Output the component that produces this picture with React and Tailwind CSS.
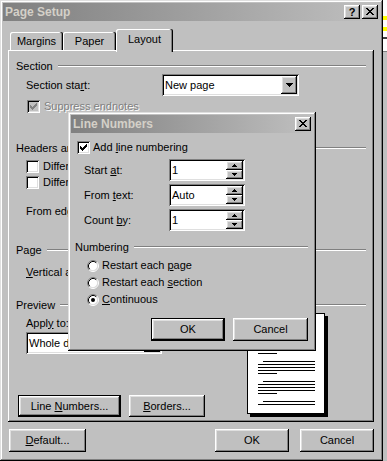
import React from "react";

const raised =
  "shadow-[inset_-1px_-1px_0_#000,inset_1px_1px_0_#fff,inset_-2px_-2px_0_#808080,inset_2px_2px_0_#dfdfdf]";
const sunken =
  "shadow-[inset_1px_1px_0_#808080,inset_-1px_-1px_0_#fff,inset_2px_2px_0_#000,inset_-2px_-2px_0_#dfdfdf]";
const frame =
  "shadow-[inset_-1px_-1px_0_#000,inset_1px_1px_0_#dfdfdf,inset_-2px_-2px_0_#808080,inset_2px_2px_0_#fff]";

function Pix({ rows, color = "#000", className = "" }) {
  const rects = [];
  rows.forEach((r, y) => {
    for (let x = 0; x < r.length; x++)
      if (r[x] === "X") rects.push(<rect key={x + "-" + y} x={x} y={y} width="1" height="1" />);
  });
  return (
    <svg width={rows[0].length} height={rows.length} fill={color} shapeRendering="crispEdges" className={className}>
      {rects}
    </svg>
  );
}

const CHECK = ["......X", ".....XX", "X...XXX", "XX.XXX.", "XXXXX..", ".XXX...", "..X...."];
const CLOSE = ["XX....XX", ".XX..XX.", "..XXXX..", "...XX...", "..XXXX..", ".XX..XX.", "XX....XX"];
const DOWN = ["XXXXXXX", ".XXXXX.", "..XXX..", "...X..."];
const SUP = ["..X..", ".XXX.", "XXXXX"];
const SDOWN = ["XXXXX", ".XXX.", "..X.."];

function Btn({ children, className = "", def = false }) {
  if (def)
    return (
      <div className={`border border-black bg-[#c0c0c0] ${className}`}>
        <div className={`w-full h-full flex items-center justify-center ${raised}`}>{children}</div>
      </div>
    );
  return <div className={`bg-[#c0c0c0] flex items-center justify-center ${raised} ${className}`}>{children}</div>;
}

function TitleBar({ title, help }) {
  return (
    <div className="h-[18px] flex items-center bg-linear-to-r from-[#808080] to-[#c0c0c0]">
      <span className="pl-[2px] font-bold text-[12px] text-[#d4d0c8] flex-1">{title}</span>
      {help && (
        <div className={`w-[16px] h-[14px] bg-[#c0c0c0] ${raised} flex items-center justify-center font-bold text-[11px] mr-[2px]`}>
          ?
        </div>
      )}
      <div className={`w-[16px] h-[14px] bg-[#c0c0c0] ${raised} flex items-center justify-center mr-[2px]`}>
        <Pix rows={CLOSE} className="-mt-[1px] -ml-[1px]" />
      </div>
    </div>
  );
}

function Check({ checked, disabled }) {
  return (
    <div className={`w-[13px] h-[13px] shrink-0 ${disabled ? "bg-[#c0c0c0]" : "bg-white"} ${sunken} flex items-center justify-center`}>
      {checked && <Pix rows={CHECK} color={disabled ? "#808080" : "#000"} />}
    </div>
  );
}

function Radio({ checked }) {
  return (
    <svg width="12" height="12" viewBox="0 0 12 12" className="shrink-0">
      <circle cx="6" cy="6" r="4.5" fill="#fff" />
      <path d="M2.11 9.89 A5.5 5.5 0 0 1 9.89 2.11" stroke="#808080" fill="none" />
      <path d="M9.89 2.11 A5.5 5.5 0 0 1 2.11 9.89" stroke="#fff" fill="none" />
      <path d="M2.82 9.18 A4.5 4.5 0 0 1 9.18 2.82" stroke="#000" fill="none" />
      <path d="M9.18 2.82 A4.5 4.5 0 0 1 2.82 9.18" stroke="#dfdfdf" fill="none" />
      {checked && <circle cx="6" cy="6" r="2" fill="#000" />}
    </svg>
  );
}

function Combo({ text, className = "" }) {
  return (
    <div className={`h-[22px] bg-white ${sunken} p-[2px] flex items-center ${className}`}>
      <span className="flex-1 pl-[1px] whitespace-nowrap overflow-hidden">{text}</span>
      <div className={`w-[16px] h-[18px] bg-[#c0c0c0] ${raised} flex items-center justify-center`}>
        <Pix rows={DOWN} />
      </div>
    </div>
  );
}

function Spin({ value }) {
  return (
    <div className={`w-[76px] h-[22px] bg-white ${sunken} p-[2px] flex`}>
      <span className="flex-1 flex items-center pl-[1px]">{value}</span>
      <div className="w-[17px] h-full flex flex-col">
        <div className={`flex-1 bg-[#c0c0c0] ${raised} flex items-center justify-center`}>
          <Pix rows={SUP} />
        </div>
        <div className={`flex-1 bg-[#c0c0c0] ${raised} flex items-center justify-center`}>
          <Pix rows={SDOWN} />
        </div>
      </div>
    </div>
  );
}

function Group({ label, className = "" }) {
  return (
    <div className={`flex items-center h-[14px] ${className}`}>
      <span className="whitespace-nowrap">{label}</span>
      <div className="flex-1 ml-[5px] h-[2px] border-t border-b border-t-[#808080] border-b-white" />
    </div>
  );
}

function PagePreview() {
  const lines = [];
  [8, 28, 48, 68].forEach((y0) => {
    lines.push([y0, 16, 68]);
    lines.push([y0 + 3, 11, 68]);
    lines.push([y0 + 6, 11, 68]);
    lines.push([y0 + 9, 11, 68]);
    lines.push([y0 + 12, 11, 30]);
  });
  lines.push([88, 16, 68]);
  lines.push([91, 11, 68]);
  return (
    <svg width="81" height="104" shapeRendering="crispEdges">
      <rect x="3" y="3" width="78" height="101" fill="#000" />
      <rect x="0.5" y="0.5" width="77" height="100" fill="#fff" stroke="#000" />
      {lines.map(([y, a, b], i) => (
        <rect key={i} x={a} y={y} width={b - a} height="1" fill="#000" />
      ))}
    </svg>
  );
}

function LineNumbersDialog() {
  return (
    <div className={`absolute left-[68px] top-[112px] w-[248px] h-[239px] bg-[#c0c0c0] p-[3px] ${frame}`}>
      <TitleBar title="Line Numbers" />
      <div className="flex items-center h-[13px] mt-[8px] pl-[6px]">
        <Check checked />
        <span className="ml-[3px]">
          Add <u>l</u>ine numbering
        </span>
      </div>
      {[
        [<>Start <u>a</u>t:</>, "1", "mt-[5px]"],
        [<>From <u>t</u>ext:</>, "Auto", "mt-[3px]"],
        [<>Count <u>b</u>y:</>, "1", "mt-[3px]"],
      ].map(([l, v, m], i) => (
        <div key={i} className={`flex items-center h-[22px] ${m}`}>
          <span className="w-[98px] pl-[13px]">{l}</span>
          <Spin value={v} />
        </div>
      ))}
      <div className="pl-[4px] pr-[5px] mt-[9px]">
        <Group label="Numbering" />
      </div>
      <div className="mt-[3px] pl-[16px]">
        {[
          [<>Restart each <u>p</u>age</>, false],
          [<>Restart each <u>s</u>ection</>, false],
          [<><u>C</u>ontinuous</>, true],
        ].map(([t, c], i) => (
          <div key={i} className="flex items-center h-[17px]">
            <Radio checked={c} />
            <span className="ml-[3px]">{t}</span>
          </div>
        ))}
      </div>
      <div className="flex justify-end mt-[10px] pr-[5px] h-[23px]">
        <Btn def className="w-[74px] h-[23px]">OK</Btn>
        <Btn className="w-[75px] h-[23px] ml-[8px]">Cancel</Btn>
      </div>
    </div>
  );
}

function Tab({ children, className = "", selected }) {
  return (
    <div
      className={`flex items-center justify-center rounded-t-[2px] bg-[#c0c0c0] shadow-[inset_-1px_0_0_#000,inset_-2px_0_0_#808080,inset_1px_1px_0_#fff] ${
        selected ? "h-[23px] -mb-[2px] pb-[2px]" : "h-[18px]"
      } ${className}`}
    >
      {children}
    </div>
  );
}

export default function App() {
  const disabled = "text-[#808080] [text-shadow:1px_1px_0_#fff]";
  return (
    <div className="flex w-[387px] h-[461px] overflow-hidden font-['Liberation_Sans',Arial,sans-serif] text-[11px] leading-none text-black">
      <div className={`relative w-[383px] h-[461px] shrink-0 bg-[#c0c0c0] p-[3px] ${frame}`}>
        <TitleBar title="Page Setup" help />
        <div className="pl-[5px]">
          <div className="flex items-end h-[21px] mt-[8px] pl-[2px] relative z-10">
            <Tab className="w-[53px]">Margins</Tab>
            <Tab className="w-[53px]">Paper</Tab>
            <Tab selected className="w-[57px]">Layout</Tab>
          </div>
          <div className="w-[366px] h-[372px] shadow-[inset_-1px_-1px_0_#000,inset_1px_1px_0_#fff,inset_-2px_-2px_0_#808080] pt-[9px] px-[8px]">
            <Group label="Section" />
            <div className="flex items-center h-[22px] mt-[1px]">
              <span className="w-[146px] pl-[10px]">
                Section sta<u>r</u>t:
              </span>
              <Combo text="New page" className="w-[137px]" />
            </div>
            <div className="flex items-center h-[13px] mt-[4px] pl-[11px]">
              <Check checked disabled />
              <span className={`ml-[4px] ${disabled}`}>
                Suppress endnotes
              </span>
            </div>
            <Group label="Headers and footers" className="mt-[28px]" />
            <div className="flex items-center h-[13px] mt-[5px] pl-[10px]">
              <Check />
              <span className="ml-[4px]">Different odd and even</span>
            </div>
            <div className="flex items-center h-[13px] mt-[3px] pl-[10px]">
              <Check />
              <span className="ml-[4px]">Different first page</span>
            </div>
            <div className="flex items-center h-[14px] mt-[15px] pl-[10px]">From edge:</div>
            <Group label="Page" className="mt-[25px]" />
            <div className="flex items-center h-[14px] mt-[8px] pl-[10px]">
              <span>
                <u>V</u>ertical alignment:
              </span>
            </div>
            <Group label="Preview" className="mt-[19px]" />
            <div className="flex">
              <div className="w-[231px]">
                <div className="flex items-center h-[14px] mt-[4px] pl-[10px]">
                  <span>
                    Appl<u>y</u> to:
                  </span>
                </div>
                <Combo text="Whole document" className="w-[136px] mt-[2px] ml-[10px]" />
                <div className="flex mt-[41px] ml-[2px]">
                  <Btn def className="w-[103px] h-[22px]">
                    <span>
                      Line <u>N</u>umbers...
                    </span>
                  </Btn>
                  <Btn className="w-[76px] h-[22px] ml-[8px]">
                    <span>
                      <u>B</u>orders...
                    </span>
                  </Btn>
                </div>
              </div>
              <div className="mt-[1px]">
                <PagePreview />
              </div>
            </div>
          </div>
          <div className="flex w-[366px] mt-[7px] h-[23px]">
            <Btn className="w-[77px] h-[23px] ml-[1px]">
              <span>
                <u>D</u>efault...
              </span>
            </Btn>
            <Btn className="w-[74px] h-[23px] ml-auto">OK</Btn>
            <Btn className="w-[74px] h-[23px] ml-[11px]">Cancel</Btn>
          </div>
        </div>
        <LineNumbersDialog />
      </div>
      <div className="w-[4px] h-[461px] flex flex-col">
        <div className="h-[16px] bg-white" />
        <div className="h-[4px] bg-[#ffff00]" />
        <div className="h-[7px] bg-white" />
        <div className="h-[4px] bg-[#ffff00]" />
        <div className="h-[6px] bg-white" />
        <div className="h-[2px] bg-[#404040]" />
        <div className="h-[12px] bg-white" />
        <div className="h-[1px] bg-[#808080]" />
        <div className="flex-1 bg-[#c0c0c0]" />
      </div>
    </div>
  );
}
